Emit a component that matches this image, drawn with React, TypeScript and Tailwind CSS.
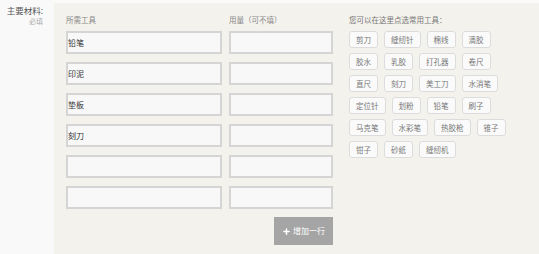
import { Plus } from 'lucide-react';

const ROWS = ['铅笔', '印泥', '垫板', '刻刀', '', ''];

const TAG_ROWS = [
  ['剪刀', '缝纫针', '棉线', '滴胶'],
  ['胶水', '乳胶', '打孔器', '卷尺'],
  ['直尺', '刻刀', '美工刀', '水消笔'],
  ['定位针', '划粉', '铅笔', '刷子'],
  ['马克笔', '水彩笔', '热胶枪', '锥子'],
  ['钳子', '砂纸', '缝纫机'],
];

const font = 'font-["Noto_Sans_CJK_SC","Noto_Sans",sans-serif]';

export default function App() {
  return (
    <div className={`flex h-[254px] w-[539px] overflow-hidden bg-[#f9f9f9] ${font}`}>
      <div className="w-[54px] shrink-0 pr-[11px] pt-[4px] text-right">
        <div className="text-[8.5px] leading-[12px] text-[#555]">主要材料:</div>
        <div className="text-[7px] leading-[10px] text-[#aaa]">必填</div>
      </div>

      <div className="mt-[3px] flex flex-1 bg-[#f4f2ed] pl-[12px] pt-[12px]">
        <div className="flex flex-col">
          <div className="flex gap-[7px] text-[7.5px] leading-[10px] text-[#888]">
            <div className="w-[156px]">所需工具</div>
            <div className="w-[104px]">用量（可不填）</div>
          </div>
          <div className="mt-[6px] flex flex-col gap-[8px]">
            {ROWS.map((r, i) => (
              <div key={i} className="flex gap-[7px]">
                <div className="flex h-[23px] w-[156px] items-center border-2 border-[#d5d5d5] bg-[#f8f8f8] text-[8px] text-[#333]">
                  {r}
                </div>
                <div className="h-[23px] w-[104px] border-2 border-[#d5d5d5] bg-[#f8f8f8]" />
              </div>
            ))}
          </div>
          <div className="mt-[8px] flex justify-end">
            <button className="flex h-[28px] w-[59px] items-center justify-center gap-[2px] bg-[#a5a5a5] text-[8px] text-white">
              <Plus className="h-[9px] w-[9px]" strokeWidth={4} />
              增加一行
            </button>
          </div>
        </div>

        <div className="ml-[16px] flex flex-col">
          <div className="text-[7.5px] leading-[10px] text-[#777]">您可以在这里点选常用工具：</div>
          <div className="mt-[6px] flex flex-col gap-[5px]">
            {TAG_ROWS.map((row, i) => (
              <div key={i} className="flex gap-[6px]">
                {row.map((t) => (
                  <span
                    key={t}
                    className="flex h-[17px] items-center rounded-[3px] border border-[#dcdcdc] bg-[#fafafa] px-[6px] text-[7.5px] text-[#777]"
                  >
                    {t}
                  </span>
                ))}
              </div>
            ))}
          </div>
        </div>
      </div>
    </div>
  );
}
